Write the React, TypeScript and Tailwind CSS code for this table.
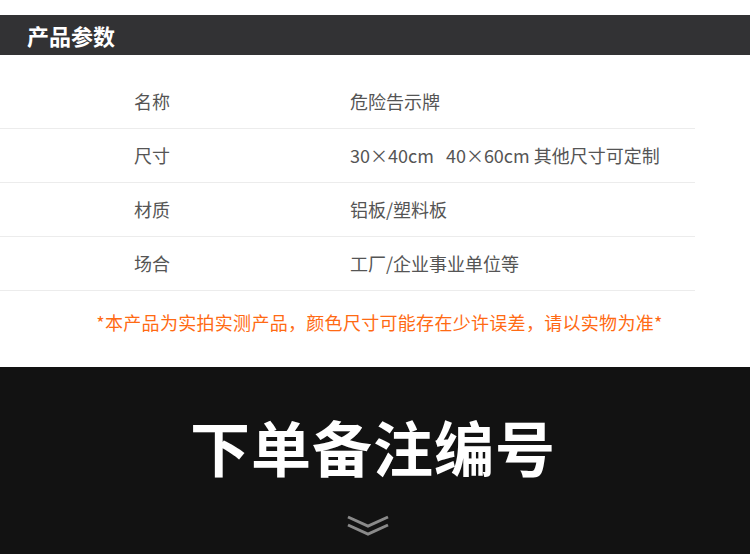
import React from "react";

const rows: [string, React.ReactNode][] = [
  ["名称", "危险告示牌"],
  ["尺寸", <span>30×40cm&nbsp;&nbsp;&nbsp;40×60cm 其他尺寸可定制</span>],
  ["材质", "铝板/塑料板"],
  ["场合", "工厂/企业事业单位等"],
];

export default function App() {
  return (
    <div
      className="w-[750px] h-[554px] overflow-hidden bg-white"
      style={{ fontFamily: '"Noto Sans CJK SC", "Noto Sans", sans-serif' }}
    >
      <div className="h-[15px]" />
      <div className="h-[40px] bg-[#323234] flex items-center pl-[27px]">
        <span className="text-white font-bold text-[22px] leading-none">产品参数</span>
      </div>
      <div className="pt-[20px]">
        {rows.map(([k, v]) => (
          <div
            key={k}
            className="w-[695px] h-[54px] flex items-center text-[18px] text-[#555555] border-b border-[#ececec]"
          >
            <span className="w-[350px] pl-[134px]">{k}</span>
            <span>{v}</span>
          </div>
        ))}
      </div>
      <div className="h-[76px] flex items-center justify-center pb-[14px] pl-[9px]">
        <span className="text-[18px] tracking-[0.3px] text-[#ff6a13]">*本产品为实拍实测产品，颜色尺寸可能存在少许误差，请以实物为准*</span>
      </div>
      <div className="h-[187px] bg-[#121212] flex flex-col items-center">
        <div className="mt-[49px] mr-[4px] text-white font-bold text-[60px] leading-none tracking-[1px]">下单备注编号</div>
        <svg className="mt-[39px] mr-[14px]" width="44" height="22" viewBox="0 0 44 22" fill="none" stroke="#8a8a8a" strokeWidth="3">
          <path d="M2 2 L22 11 L42 2" />
          <path d="M2 10 L22 19 L42 10" />
        </svg>
      </div>
    </div>
  );
}
